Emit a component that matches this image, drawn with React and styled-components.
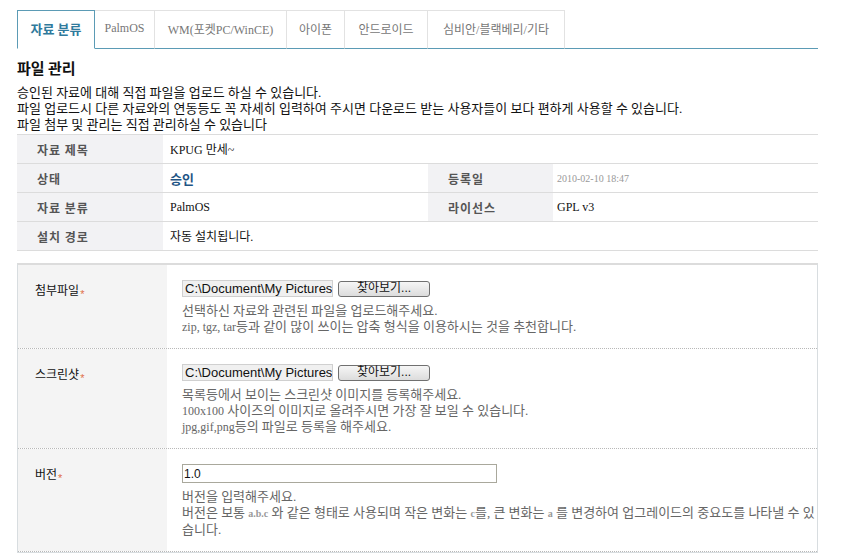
import React from "react";
import styled, { createGlobalStyle } from "styled-components";

const GlobalStyle = createGlobalStyle`
  body {
    margin: 0;
    background: #fff;
    font-family: "Liberation Serif", "Noto Sans CJK KR", serif;
    font-size: 13px;
    color: #222;
  }
`;

const tabs = [
  { label: "자료 분류", width: 78, active: true },
  { label: "PalmOS", width: 60 },
  { label: "WM(포켓PC/WinCE)", width: 132 },
  { label: "아이폰", width: 58 },
  { label: "안드로이드", width: 83 },
  { label: "심비안/블랙베리/기타", width: 137 },
];

function App() {
  return (
    <Page>
      <GlobalStyle />
      <TabBar>
        {tabs.map((t) => (
          <Tab key={t.label} $width={t.width} $active={t.active}>
            {t.label}
          </Tab>
        ))}
      </TabBar>

      <Title>파일 관리</Title>
      <Desc>
        승인된 자료에 대해 직접 파일을 업로드 하실 수 있습니다.
        <br />
        파일 업로드시 다른 자료와의 연동등도 꼭 자세히 입력하여 주시면 다운로드 받는 사용자들이 보다 편하게 사용할 수 있습니다.
        <br />
        파일 첨부 및 관리는 직접 관리하실 수 있습니다
      </Desc>

      <InfoGrid>
        <InfoLabel>자료 제목</InfoLabel>
        <InfoValue $span={3}>KPUG 만세~</InfoValue>

        <InfoLabel>상태</InfoLabel>
        <InfoValue>
          <Status>승인</Status>
        </InfoValue>
        <InfoLabel>등록일</InfoLabel>
        <InfoValue $tight>
          <DateText>2010-02-10 18:47</DateText>
        </InfoValue>

        <InfoLabel>자료 분류</InfoLabel>
        <InfoValue>PalmOS</InfoValue>
        <InfoLabel>라이선스</InfoLabel>
        <InfoValue $tight>GPL v3</InfoValue>

        <InfoLabel>설치 경로</InfoLabel>
        <InfoValue $span={3}>자동 설치됩니다.</InfoValue>
      </InfoGrid>

      <FormBox>
        <FormRow>
          <FormLabel>
            첨부파일<Req>*</Req>
          </FormLabel>
          <FormValue>
            <FileLine>
              <FilePath>C:\Document\My Pictures</FilePath>
              <BrowseButton type="button">찾아보기...</BrowseButton>
            </FileLine>
            <Help>
              선택하신 자료와 관련된 파일을 업로드해주세요.
              <br />
              <Latin>zip, tgz, tar</Latin>등과 같이 많이 쓰이는 압축 형식을 이용하시는 것을 추천합니다.
            </Help>
          </FormValue>
        </FormRow>

        <FormRow>
          <FormLabel>
            스크린샷<Req>*</Req>
          </FormLabel>
          <FormValue>
            <FileLine>
              <FilePath>C:\Document\My Pictures</FilePath>
              <BrowseButton type="button">찾아보기...</BrowseButton>
            </FileLine>
            <Help>
              목록등에서 보이는 스크린샷 이미지를 등록해주세요.
              <br />
              <Latin>100x100</Latin> 사이즈의 이미지로 올려주시면 가장 잘 보일 수 있습니다.
              <br />
              <Latin>jpg,gif,png</Latin>등의 파일로 등록을 해주세요.
            </Help>
          </FormValue>
        </FormRow>

        <FormRow>
          <FormLabel>
            버전<Req>*</Req>
          </FormLabel>
          <FormValue>
            <VersionInput defaultValue="1.0" />
            <Help>
              버전을 입력해주세요.
              <br />
              버전은 보통 <Small>a.b.c</Small> 와 같은 형태로 사용되며 작은 변화는 <Small>c</Small>를, 큰 변화는 <Small>a</Small> 를 변경하여 업그레이드의 중요도를 나타낼 수 있습니다.
            </Help>
          </FormValue>
        </FormRow>
      </FormBox>
    </Page>
  );
}

// page
const Page = styled.div`
  width: 801px;
  padding: 10px 0 0 17px;
`;

// tabs
const TabBar = styled.div`
  display: flex;
  height: 38px;
  border-bottom: 1px solid #5b9bb5;
`;

const Tab = styled.div`
  box-sizing: border-box;
  width: ${(p) => p.$width}px;
  height: 39px;
  display: flex;
  align-items: center;
  justify-content: center;
  border: 1px solid ${(p) => (p.$active ? "#5b9bb5" : "#e2e2e2")};
  border-bottom-color: ${(p) => (p.$active ? "#fff" : "#5b9bb5")};
  border-left-width: ${(p) => (p.$active ? "1px" : "0")};
  background: #fff;
  color: ${(p) => (p.$active ? "#2f7a9c" : "#777")};
  font-size: ${(p) => (p.$active ? "13px" : "12px")};
  font-weight: ${(p) => (p.$active ? "bold" : "normal")};
  padding-bottom: 2px;
`;

// heading
const Title = styled.h2`
  margin: 10px 0 8px;
  font-family: "Noto Sans CJK KR", sans-serif;
  font-size: 15px;
  font-weight: bold;
  color: #111;
  line-height: 18px;
`;

const Desc = styled.p`
  margin: 0 0 1px;
  line-height: 16px;
  color: #111;
`;

// info table
const InfoGrid = styled.div`
  display: grid;
  grid-template-columns: 146px 265px 125px 1fr;
  border-top: 1px solid #dcdcdc;
`;

const InfoLabel = styled.div`
  height: 28px;
  display: flex;
  align-items: center;
  padding-left: 20px;
  background: #f2f2f4;
  border-bottom: 1px solid #dcdcdc;
  color: #555;
  font-family: "Noto Sans CJK KR", sans-serif;
  font-size: 12px;
  font-weight: bold;
  letter-spacing: 1px;
`;

const InfoValue = styled.div`
  height: 28px;
  display: flex;
  align-items: center;
  padding-left: ${(p) => (p.$tight ? "4px" : "7px")};
  grid-column: span ${(p) => p.$span || 1};
  border-bottom: 1px solid #dcdcdc;
  font-size: 12px;
  color: #111;
`;

const Status = styled.span`
  font-family: "Noto Sans CJK KR", sans-serif;
  font-weight: bold;
  font-size: 13px;
  color: #1f5585;
`;

const DateText = styled.span`
  font-size: 10px;
  color: #999;
`;

// form
const FormBox = styled.div`
  margin-top: 12px;
  border: 1px solid #d8dde0;
  border-top: 2px solid #dcdcdc;
`;

const FormRow = styled.div`
  display: grid;
  grid-template-columns: 149px 1fr;
  border-bottom: 1px dotted #b8b8b8;
`;

const FormLabel = styled.div`
  background: #f4f4f4;
  padding: 16px 0 0 17px;
  font-size: 12px;
  color: #111;
`;

const Req = styled.span`
  color: #e0704a;
  font-family: "Liberation Sans", sans-serif;
  font-size: 11px;
  vertical-align: -3px;
  margin-left: 1px;
`;

const FormValue = styled.div`
  padding: 15px 0 13px 15px;
`;

const FileLine = styled.div`
  display: flex;
  align-items: center;
  gap: 5px;
  height: 17px;
`;

const FilePath = styled.div`
  box-sizing: border-box;
  width: 151px;
  height: 17px;
  padding: 0 2px;
  background: #f0f0f0;
  border: 1px solid #d0d0d0;
  font-family: "Liberation Sans", sans-serif;
  font-size: 13px;
  line-height: 15px;
  color: #111;
  white-space: nowrap;
  overflow: hidden;
`;

const BrowseButton = styled.button`
  box-sizing: border-box;
  width: 92px;
  height: 16px;
  padding: 0;
  border: 1px solid #707070;
  border-radius: 3px;
  background: linear-gradient(#f6f6f6, #dcdcdc);
  font-family: "Liberation Sans", "Noto Sans CJK KR", sans-serif;
  font-size: 12px;
  line-height: 13px;
  color: #111;
`;

const VersionInput = styled.input`
  display: block;
  box-sizing: border-box;
  width: 315px;
  height: 19px;
  margin: 0;
  padding: 0 1px;
  border: 1px solid #a9a89c;
  font-family: "Liberation Sans", sans-serif;
  font-size: 12px;
  color: #111;
  outline: none;
`;

const Help = styled.div`
  margin-top: 6px;
  line-height: 16px;
  color: #666;
`;

const Latin = styled.span`
  font-size: 12px;
`;

const Small = styled.span`
  font-size: 10px;
  font-weight: bold;
  color: #999;
`;

export default App;
